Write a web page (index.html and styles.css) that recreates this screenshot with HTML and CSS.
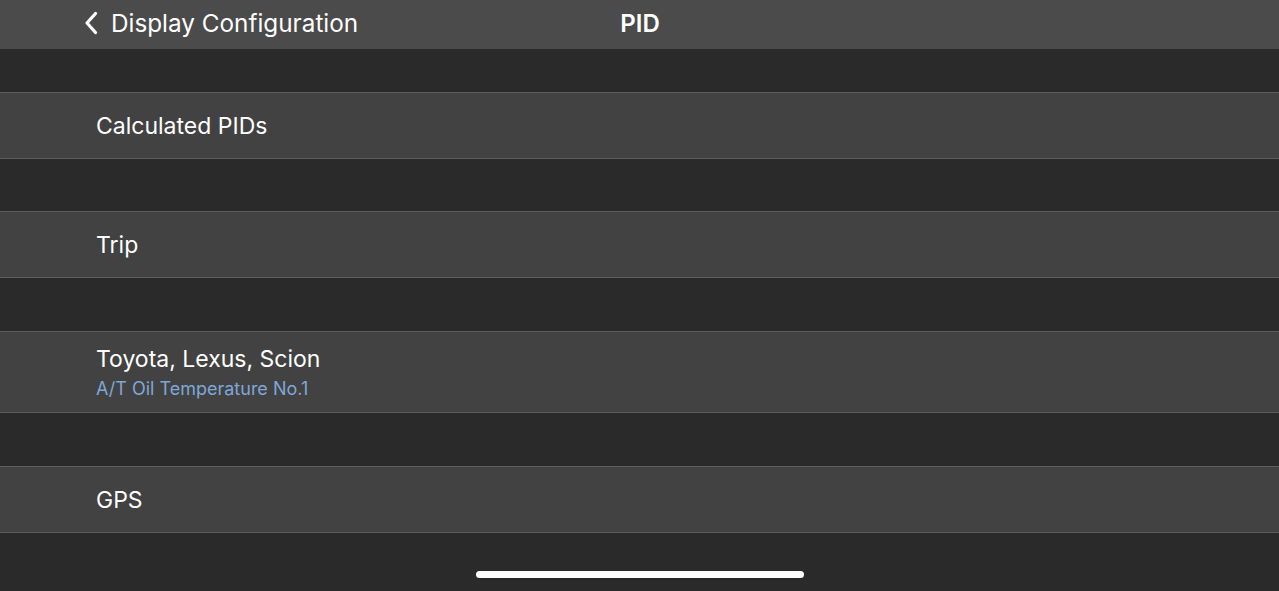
FILE: index.html
```html
<!DOCTYPE html>
<html>

<head>
    <meta charset="utf-8" />
    <title>PID</title>
    <meta name="viewport" content="width=device-width, initial-scale=1">
    <link rel="stylesheet" href="styles.css">
</head>

<body>
    <div class="nav-bar">
        <div class="back">
            <svg class="chevron" width="14" height="24" viewBox="0 0 14 24">
                <path d="M11.5 2.5 L3 12 L11.5 21.5" fill="none" stroke="#fff" stroke-width="3.2" stroke-linecap="round" stroke-linejoin="round" />
            </svg>
            <span>Display Configuration</span>
        </div>
        <div class="title">PID</div>
        <div class="spacer"></div>
    </div>

    <div class="list">
        <div class="gap first"></div>
        <div class="row">
            <div class="row-title">Calculated PIDs</div>
        </div>
        <div class="gap second"></div>
        <div class="row">
            <div class="row-title">Trip</div>
        </div>
        <div class="gap"></div>
        <div class="row tall">
            <div class="row-title">Toyota, Lexus, Scion</div>
            <div class="row-sub">A/T Oil Temperature No.1</div>
        </div>
        <div class="gap"></div>
        <div class="row">
            <div class="row-title">GPS</div>
        </div>
    </div>

    <div class="home-bar"></div>
</body>

</html>
```

FILE: styles.css
```css
body {
    margin: 0;
    background-color: #2a2a2a;
    color: #fff;
    font-family: Inter, "Noto Sans", sans-serif;
    height: 591px;
    overflow: hidden;
    display: flex;
    flex-direction: column;
}

.nav-bar {
    height: 49px;
    box-sizing: border-box;
    padding: 0 0 3px 84px;
    background-color: #4b4b4b;
    display: flex;
    align-items: center;
}

.back {
    display: flex;
    align-items: center;
    gap: 13px;
    font-size: 24.3px;
    width: 472px;
}

.chevron {
    flex-shrink: 0;
}

.title {
    font-size: 24px;
    font-weight: 600;
    width: 168px;
    text-align: center;
}

.spacer {
    flex: 1;
}

.list {
    display: flex;
    flex-direction: column;
}

.gap {
    height: 53px;
}

.gap.first {
    height: 43px;
}

.gap.second {
    height: 52px;
}

.row {
    height: 65px;
    background-color: #424242;
    border-top: 1px solid #5e5e5e;
    border-bottom: 1px solid #5e5e5e;
    display: flex;
    flex-direction: column;
    justify-content: center;
    padding-left: 96px;
}

.row.tall {
    height: 80px;
}

.row-title {
    font-size: 23px;
}

.row-sub {
    font-size: 18px;
    color: #7fa7d6;
    margin-top: 5px;
}

.home-bar {
    width: 328px;
    height: 7px;
    border-radius: 4px;
    background-color: #fff;
    margin: 38px auto 0;
}
```
